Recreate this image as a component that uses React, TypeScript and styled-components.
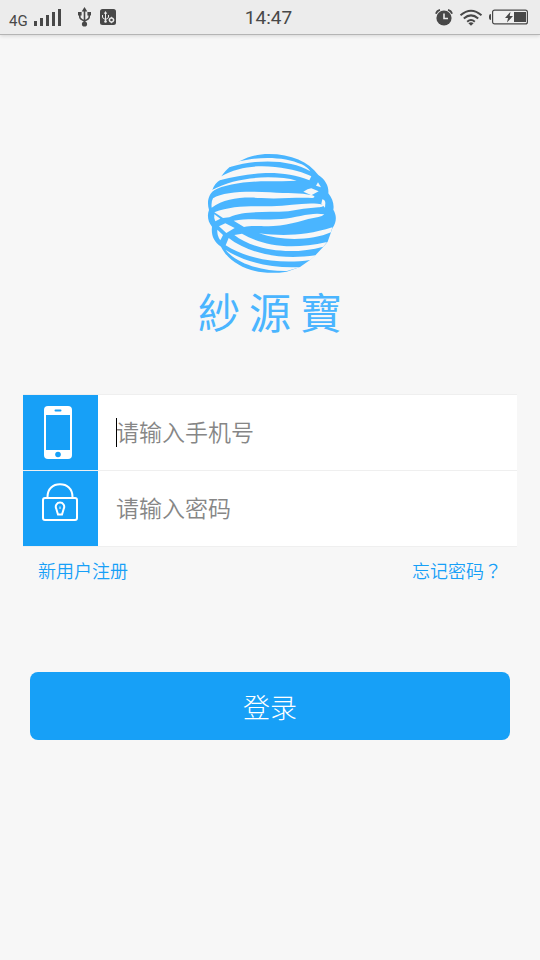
import React from "react";
import styled, { createGlobalStyle } from "styled-components";

const BLUE = "#17a0f7";
const LOGO = "#4ab5ff";
const PAGE = "#f7f7f7";
const INK = "#484848";

const GlobalStyle = createGlobalStyle`
  *, *::before, *::after { box-sizing: border-box; }
  body {
    margin: 0;
    background: ${PAGE};
    font-family: Roboto, "Noto Sans CJK SC", sans-serif;
  }
`;

const Screen = styled.div`
  min-height: 100vh;
  display: flex;
  flex-direction: column;
  background: ${PAGE};
`;

const StatusBar = styled.header`
  display: grid;
  grid-template-columns: 1fr auto 1fr;
  align-items: center;
  height: 35px;
  padding: 0 12px 0 9px;
  background: #ececec;
  border-bottom: 1px solid #b4b4b4;
  box-shadow: 0 1px 4px rgba(0, 0, 0, 0.14);
  color: ${INK};
`;

const StatusGroup = styled.div<{ $end?: boolean }>`
  display: flex;
  align-items: center;
  justify-content: ${(p) => (p.$end ? "flex-end" : "flex-start")};
  gap: 6px;
`;

const Network = styled.span`
  font-size: 15px;
  line-height: 20px;
  padding-top: 8px;
`;

const Clock = styled.time`
  font-size: 19px;
  line-height: 24px;
  padding-top: 1px;
`;

const Icon = styled.svg`
  display: block;
  flex: none;
`;

const UsbIcon = styled(Icon)`
  margin-left: 11px;
  margin-right: 3px;
`;

const Content = styled.main`
  display: flex;
  flex-direction: column;
  padding: 110px 23px 40px;
`;

const Brand = styled.div`
  display: flex;
  flex-direction: column;
  align-items: center;
  margin-bottom: 54px;
`;

const BrandName = styled.h1`
  display: flex;
  gap: 9px;
  margin: 2px 0 0;
  color: ${LOGO};
  font-family: "Noto Sans CJK TC", sans-serif;
  font-size: 42px;
  font-weight: 400;
  line-height: 58px;
`;

const Form = styled.form`
  display: flex;
  flex-direction: column;
  border-top: 1px solid #efefef;
`;

const Field = styled.div`
  display: flex;
  height: 76px;
  background: #fff;
  border-bottom: 1px solid #efefef;
`;

const FieldLabel = styled.label`
  flex: none;
  width: 75px;
  padding: 11px 0 0 19px;
  background: ${BLUE};
`;

const InputArea = styled.div<{ $caret?: boolean }>`
  position: relative;
  flex: 1;
  min-width: 0;

  &::before {
    content: "";
    display: ${(p) => (p.$caret ? "block" : "none")};
    position: absolute;
    left: 18px;
    top: 23px;
    width: 1px;
    height: 29px;
    background: #000;
  }

  &:focus-within::before {
    display: none;
  }
`;

const Input = styled.input`
  display: block;
  width: 100%;
  height: 100%;
  padding: 2px 18px 0;
  border: 0;
  outline: 0;
  background: transparent;
  color: #333;
  font-family: inherit;
  font-size: 23px;
  font-weight: 350;

  &::placeholder {
    color: #868686;
    opacity: 1;
  }
`;

const Links = styled.nav`
  display: flex;
  justify-content: space-between;
  padding: 11px 15px 0;
`;

const TextLink = styled.a`
  color: ${BLUE};
  font-size: 18px;
  font-weight: 350;
  line-height: 28px;
  text-decoration: none;
`;

const CenteredMark = styled.span`
  font-family: "Noto Sans CJK TC", sans-serif;
  line-height: 1;
`;

const LoginButton = styled.button`
  height: 68px;
  margin: 86px 7px 0;
  border: 0;
  border-radius: 8px;
  background: ${BLUE};
  color: #fff;
  font-family: inherit;
  font-size: 27px;
  font-weight: 300;
  cursor: pointer;
`;

const SignalBars = () => (
  <Icon width="27" height="18" viewBox="0 0 27 18" fill={INK} aria-hidden="true">
    <path d="M0 13h3v5H0zM6 10h3v8H6zM12 7h3v11h-3zM18 4h3v14h-3zM24 1h3v17h-3z" />
  </Icon>
);

const Usb = () => (
  <UsbIcon width="13" height="20" viewBox="0 0 13 20" fill="none" stroke={INK} strokeWidth="1.6" aria-hidden="true">
    <path d="M6.5 3v14M1.8 7v3q0 2 4.7 4q4.7-2 4.7-4V7" />
    <path d="M6.5 0 9.3 4.5H3.7z" fill={INK} stroke="none" />
    <circle cx="6.5" cy="17" r="2.6" fill={INK} stroke="none" />
    <path d="M0 5h3.6v3.6H0zM9.4 5H13v3.6H9.4z" fill={INK} stroke="none" />
  </UsbIcon>
);

const UsbDebug = () => (
  <Icon width="16" height="16" viewBox="0 0 16 16" aria-hidden="true">
    <rect width="16" height="16" rx="2.5" fill={INK} />
    <g fill="none" stroke="#ececec">
      <path d="M5.500 3.500v9M2.500 6v2q0 1.500 3 2.500 3-1 3-2.500V6" />
      <circle cx="11.5" cy="11" r="2" strokeWidth="1.3" />
      <path d="M11.500 7.800v1M11.500 13.200v1M8.600 11h1M13.400 11h1" />
    </g>
    <path d="M5.500 2 7.200 4.700H3.800z" fill="#ececec" />
    <circle cx="5.5" cy="12.5" r="1.3" fill="#ececec" />
  </Icon>
);

const Alarm = () => (
  <Icon width="18" height="17" viewBox="0 0 18 17" aria-hidden="true">
    <circle cx="9" cy="9" r="7.6" fill={INK} />
    <path d="M9 4.500V9.500h4" fill="none" stroke="#ececec" strokeWidth="1.6" />
    <path d="M1 4.800Q1.800 1.700 5 .9M17 4.800Q16.200 1.700 13 .9" fill="none" stroke={INK} strokeWidth="1.8" />
  </Icon>
);

const Wifi = () => (
  <Icon width="24" height="17" viewBox="0 0 24 17" fill="none" stroke={INK} strokeWidth="2" aria-hidden="true">
    <path d="M1.500 6.300Q12-2.700 22.500 6.300M4.800 9.500q7.200-6.200 14.400 0M8.200 12.700q3.800-3.300 7.600 0" />
    <path d="m12 16.800-2.600-2.600q2.600-2 5.200 0z" fill={INK} stroke="none" />
  </Icon>
);

const Battery = () => (
  <Icon width="39" height="16" viewBox="0 0 39 16" aria-hidden="true">
    <rect x="3.6" y="1.1" width="34.8" height="13.8" rx="2" fill="#f0f0f0" stroke={INK} strokeWidth="1.2" />
    <path d="M2 5v6Q0 11 0 9V7q0-2 2-2zM25 3h12v10H25zM21.500 2.800 16 9h3l-1 4.500L24 7h-3.300z" fill={INK} />
  </Icon>
);

const Phone = () => (
  <Icon width="36" height="54" viewBox="-2 0 36 54" aria-hidden="true">
    <rect width="28" height="53" rx="4" fill="#fff" />
    <path d="M2 9h24v35H2z" fill={BLUE} />
    <rect x="10.5" y="3.4" width="7" height="2" rx="1" fill={BLUE} />
    <circle cx="14" cy="48.5" r="2.8" fill={BLUE} />
  </Icon>
);

const Lock = () => (
  <Icon width="36" height="40" viewBox="0 0 36 40" fill="none" stroke="#fff" strokeWidth="2" aria-hidden="true">
    <rect x="1" y="16" width="34" height="22" rx="2" />
    <path d="M5.500 16V15C5.500 6.500 11 2.300 18 2.300S30.500 6.500 30.500 15v1" />
    <path d="M18 20.500a4.200 4.200 0 0 0-3.800 6L16 32.500h4l1.800-6A4.200 4.200 0 0 0 18 20.500z" />
    <path d="M18 24.500v2.500" strokeWidth="1" />
  </Icon>
);

const Globe = () => (
  <Icon width="150" height="135" viewBox="0 0 450 405" aria-hidden="true">
    <path
      fill={LOGO}
      d="M135 48C160 34 190 27 221 27C290 27 340 50 370 90C392 104 402 125 400 145C412 160 418 178 415 194C425 210 426 232 412 250L408 262L398 290L385 305L362 330L345 345L315 366L275 380C180 395 105 360 78 305C56 290 48 270 51 245C38 230 36 210 42 195C34 168 42 145 62 132L52 135C56 123 64 112 75 105L105 90L78 95C87 82 96 72 105 65Z"
    />
    <g fill={PAGE}>
      <path d="M133 49C190 34 270 34 320 58Q338 67 346 79C305 54 245 45 180 51Q145 54 105 66L90 60Z" />
      <path d="M76 95C130 64 190 60 240 66C290 71 330 84 349 94L343 106C300 89 250 82 200 85Q140 88 74 106L60 105Z" />
      <path d="M50 136C100 107 160 98 219 97Q270 97 305 107Q260 109 219 109C150 109 90 118 55 137Z" />
      <path d="M325 140Q338 131 349 130L371 139L349 151Z" />
      <path d="M369 112L378 127L363 122Z" />
      <path d="M54 160C85 141 150 138 225 142C280 146 315 143 352 151Q365 156 352 159C305 156 250 163 200 159C140 155 90 160 50 188Q48 170 54 160Z" />
      <path d="M382 163Q391 165 391 175L390 188L379 176Z" />
      <path d="M58 202C110 181 170 184 230 184C290 183 340 169 388 180Q382 188 370 187Q325 190 280 199C210 204 150 195 103 217L84 219Z" />
      <path d="M58 208L76 221L61 229Q56 218 58 208Z" />
      <path d="M116 227C165 218 210 226 260 222C310 217 350 200 388 208Q382 215 370 216C330 222 290 240 235 243C190 245 170 241 147 246Z" />
      <path d="M72 244L91 235L119 249L94 264Z" />
      <path d="M67 254L84 270L76 286Q65 270 67 254Z" />
      <path d="M192 265C260 274 330 273 412 247L408 262C350 287 260 289 192 265Z" />
      <path d="M118 270L141 266C200 300 280 317 396 291L385 305C280 334 170 312 118 270Z" />
      <path d="M101 279C160 324 250 346 362 331L346 345C260 358 160 345 92 301Z" />
      <path d="M91 314C145 350 230 371 316 366L276 378C195 379 125 355 91 314Z" />
    </g>
  </Icon>
);

export default function App() {
  return (
    <Screen>
      <GlobalStyle />
      <StatusBar>
        <StatusGroup>
          <Network>4G</Network>
          <SignalBars />
          <Usb />
          <UsbDebug />
        </StatusGroup>
        <Clock>14:47</Clock>
        <StatusGroup $end>
          <Alarm />
          <Wifi />
          <Battery />
        </StatusGroup>
      </StatusBar>
      <Content>
        <Brand>
          <Globe />
          <BrandName>
            <span>紗</span>
            <span>源</span>
            <span>寶</span>
          </BrandName>
        </Brand>
        <Form onSubmit={(e) => e.preventDefault()}>
          <Field>
            <FieldLabel htmlFor="phone" aria-label="手机号">
              <Phone />
            </FieldLabel>
            <InputArea $caret>
              <Input id="phone" type="tel" placeholder="请输入手机号" />
            </InputArea>
          </Field>
          <Field>
            <FieldLabel htmlFor="password" aria-label="密码">
              <Lock />
            </FieldLabel>
            <InputArea>
              <Input id="password" type="password" placeholder="请输入密码" />
            </InputArea>
          </Field>
          <Links>
            <TextLink href="#register">新用户注册</TextLink>
            <TextLink href="#forgot">
              忘记密码<CenteredMark>？</CenteredMark>
            </TextLink>
          </Links>
          <LoginButton type="submit">登录</LoginButton>
        </Form>
      </Content>
    </Screen>
  );
}
